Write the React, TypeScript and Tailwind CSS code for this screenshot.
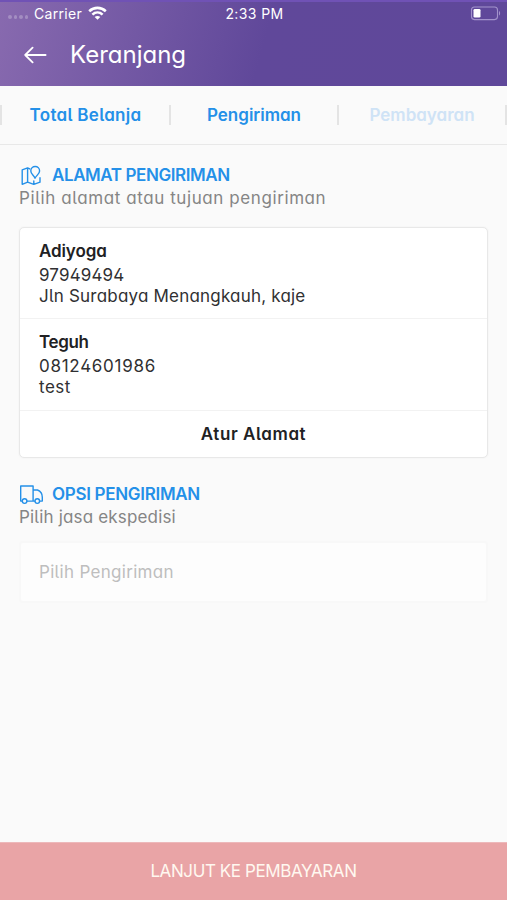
import type { ReactNode } from "react";

function WifiIcon() {
  return (
    <svg width="19" height="14" viewBox="0 0 19 14" fill="none" stroke="#fff" strokeWidth="2.6">
      <path d="M1.2 5.2C6 .7 13 .7 17.8 5.2" />
      <path d="M4.4 8.6C7.4 5.8 11.6 5.8 14.6 8.6" />
      <path d="M9.5 13.8 6.7 11C8.3 9.5 10.7 9.5 12.3 11Z" fill="#fff" stroke="none" />
    </svg>
  );
}

function BatteryIcon() {
  return (
    <svg width="31" height="15" viewBox="0 0 31 15" fill="none">
      <rect x="1.5" y="1" width="26" height="12.6" rx="3" stroke="#a393cc" strokeWidth="1.1" />
      <rect x="3.5" y="3" width="7" height="8.6" rx="1.3" fill="#fff" />
      <path d="M29 5v4.6c1.5-.6 1.5-4 0-4.6Z" fill="#a393cc" />
    </svg>
  );
}

function BackIcon() {
  return (
    <svg width="24" height="18" viewBox="0 0 24 18" fill="none" stroke="#fff" strokeWidth="1.8" strokeLinecap="round" strokeLinejoin="round">
      <path d="M21.6 9H1.2M8.6 1.6 1.2 9l7.4 7.4" />
    </svg>
  );
}

function MapIcon() {
  return (
    <svg width="24" height="22" viewBox="0 0 24 22" fill="none" stroke="#2490e8" strokeWidth="1.4" strokeLinejoin="round" strokeLinecap="round">
      <path d="M10.8 3.9 8.6 2.9 3.2 4.9v14.4L8.6 17.2l6.2 2.2 6.2-2.2v-4.4M8.6 2.9v14.3M14.8 16v3.4" />
      <path d="M16 13.2c-.8-2.6-4.2-4.3-4.2-7.3a4.4 4.4 0 0 1 8.8 0c0 3-3.4 4.7-4.6 7.3Z" />
    </svg>
  );
}

function TruckIcon() {
  return (
    <svg width="24" height="22" viewBox="0 0 24 22" fill="none" stroke="#2490e8" strokeWidth="1.4" strokeLinejoin="round">
      <path d="M3.2 17.1H1.7V2h12.4v15.1H8M14.1 6h4.4c2.8 1 4.8 4 4.8 7.2v3.9h-2.6M16 17.1h-1.9" />
      <circle cx="5.6" cy="17.1" r="2.3" />
      <circle cx="18.3" cy="17.1" r="2.3" />
    </svg>
  );
}

function SectionTitle({ icon, children }: { icon: ReactNode; children: ReactNode }) {
  return (
    <div className="flex h-[22px] items-center gap-[9px]">
      {icon}
      {children}
    </div>
  );
}

export default function App() {
  return (
    <div className="flex h-[900px] w-full flex-col overflow-hidden whitespace-nowrap bg-[#fafafa] font-['Inter',sans-serif] text-[17px] text-[#303032] [font-feature-settings:'cv11','cv05','cv02']">
      <header className="h-[86px] border-t-2 border-[#7052b5] bg-[linear-gradient(105deg,#886aaf_0%,#60489a_52%,#5f489a_100%)] text-white">
        <div className="grid h-[22px] grid-cols-3 items-center pl-2 pr-[6px] text-[14px] [font-feature-settings:normal]">
          <div className="flex items-center">
            <div className="mt-2 flex w-[26px] gap-[2px]">
              {[0, 1, 2, 3].map((dot) => (
                <i key={dot} className="size-[3.5px] rounded-full bg-white/25" />
              ))}
            </div>
            <span className="mr-[6px] tracking-[0.3px]">Carrier</span>
            <WifiIcon />
          </div>
          <span className="text-center tracking-[0.4px]">2:33 PM</span>
          <div className="flex justify-end"><BatteryIcon /></div>
        </div>
        <div className="flex h-[62px] items-center gap-[22px] pl-[24px]">
          <BackIcon />
          <h1 className="text-[24px]">Keranjang</h1>
        </div>
      </header>

      <nav className="flex h-[59px] items-center border-b border-[#e8e8e8] font-semibold text-[#2490e8]">
        <div className="h-5 w-[2px] bg-[#e4e4e4]" />
        <div className="w-[167px] pt-px text-center tracking-[0.28px]">Total Belanja</div>
        <div className="h-5 w-[2px] bg-[#e4e4e4]" />
        <div className="w-[166px] pt-px text-center">Pengiriman</div>
        <div className="h-5 w-[2px] bg-[#e4e4e4]" />
        <div className="w-[166px] pt-px text-center text-[#cfe3f6]">Pembayaran</div>
        <div className="h-5 w-[2px] bg-[#e4e4e4]" />
      </nav>

      <main className="flex-1 px-[19px] pt-[20px]">
        <SectionTitle icon={<MapIcon />}>
          <h2 className="font-semibold tracking-[-0.42px] text-[#2490e8]">ALAMAT PENGIRIMAN</h2>
        </SectionTitle>
        <p className="h-[23px] leading-[23px] tracking-[0.59px] text-[#858585]">Pilih alamat atau tujuan pengiriman</p>

        <div className="mt-[17px] h-[231px] rounded-[5px] border border-[#e8e8e8] bg-white shadow-[0_0_2px_#eeeeee]">
          <div className="h-[91px] border-b border-[#f2f2f2] pl-[19px] pt-3">
            <h3 className="h-[23px] font-semibold leading-[23px] tracking-[-0.1px] text-[#212123]">Adiyoga</h3>
            <p className="h-[22px] leading-[24px] tracking-[0.15px]">97949494</p>
            <p className="h-[21px] leading-[23px] tracking-[0.2px]">Jln Surabaya Menangkauh, kaje</p>
          </div>
          <div className="h-[92px] border-b border-[#f2f2f2] pl-[19px] pt-3">
            <h3 className="h-[23px] font-semibold leading-[23px] tracking-[-0.35px] text-[#212123]">Teguh</h3>
            <p className="h-[22px] leading-[24px] tracking-[0.72px]">08124601986</p>
            <p className="h-[21px] leading-[23px] tracking-[0.5px]">test</p>
          </div>
          <div className="h-[46px] text-center font-semibold leading-[46px] tracking-[0.58px] text-[#212123]">Atur Alamat</div>
        </div>

        <div className="mt-[26px]">
          <SectionTitle icon={<TruckIcon />}>
            <h2 className="font-semibold tracking-[-0.3px] text-[#2490e8]">OPSI PENGIRIMAN</h2>
          </SectionTitle>
          <p className="h-[23px] leading-[23px] tracking-[0.17px] text-[#858585]">Pilih jasa ekspedisi</p>
        </div>
        <div className="mt-[12px] h-[62px] rounded-[4px] border-2 border-[#f8f8f8] bg-[#fdfdfd] pl-[18px] leading-[58px] tracking-[0.3px] text-[#bebebe]">
          Pilih Pengiriman
        </div>
      </main>

      <button className="h-[58px] border-t border-[#edb8ba] bg-[#e9a4a6] text-center text-[17px] tracking-[-0.4px] text-[#fff8f0]">LANJUT KE PEMBAYARAN</button>
    </div>
  );
}
